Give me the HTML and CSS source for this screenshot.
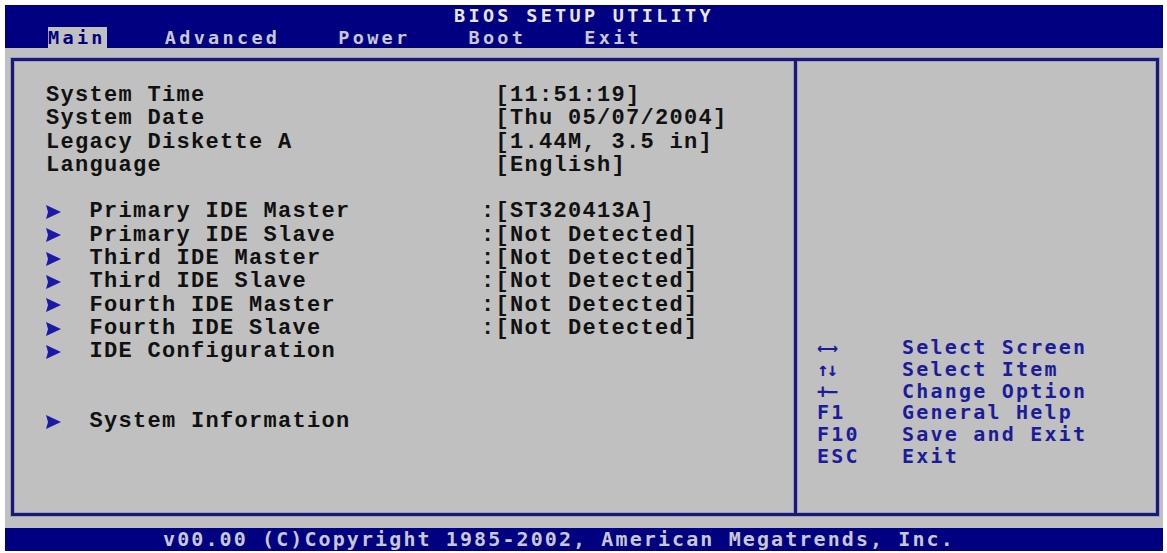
FILE: index.html
```html
<!DOCTYPE html>
<html lang="en">
<head>
    <meta charset="UTF-8">
    <meta name="viewport" content="width=device-width, initial-scale=1.0">
    <title>BIOS SETUP UTILITY</title>
    <link rel="stylesheet" href="styles.css">
</head>
<body>

    <div class="screen">
        <header class="topbar">
            <div class="title">BIOS SETUP UTILITY</div>
            <nav class="menu">
                <span class="tab active">Main</span>
                <span class="tab">Advanced</span>
                <span class="tab">Power</span>
                <span class="tab">Boot</span>
                <span class="tab">Exit</span>
            </nav>
        </header>

        <main class="workspace">
            <div class="frame">
                <section class="settings">
                    <div class="row"><span class="label">System Time</span><span class="value">[11:51:19]</span></div>
                    <div class="row"><span class="label">System Date</span><span class="value">[Thu 05/07/2004]</span></div>
                    <div class="row"><span class="label">Legacy Diskette A</span><span class="value">[1.44M, 3.5 in]</span></div>
                    <div class="row"><span class="label">Language</span><span class="value">[English]</span></div>
                    <div class="row"></div>
                    <div class="row sub"><span class="arrow"><svg width="15" height="14" viewBox="0 0 15 14"><polygon points="0,0 15,7 0,14 2,7" /></svg></span><span class="label">Primary IDE Master</span><span class="colon">:</span><span class="value">[ST320413A]</span></div>
                    <div class="row sub"><span class="arrow"><svg width="15" height="14" viewBox="0 0 15 14"><polygon points="0,0 15,7 0,14 2,7" /></svg></span><span class="label">Primary IDE Slave</span><span class="colon">:</span><span class="value">[Not Detected]</span></div>
                    <div class="row sub"><span class="arrow"><svg width="15" height="14" viewBox="0 0 15 14"><polygon points="0,0 15,7 0,14 2,7" /></svg></span><span class="label">Third IDE Master</span><span class="colon">:</span><span class="value">[Not Detected]</span></div>
                    <div class="row sub"><span class="arrow"><svg width="15" height="14" viewBox="0 0 15 14"><polygon points="0,0 15,7 0,14 2,7" /></svg></span><span class="label">Third IDE Slave</span><span class="colon">:</span><span class="value">[Not Detected]</span></div>
                    <div class="row sub"><span class="arrow"><svg width="15" height="14" viewBox="0 0 15 14"><polygon points="0,0 15,7 0,14 2,7" /></svg></span><span class="label">Fourth IDE Master</span><span class="colon">:</span><span class="value">[Not Detected]</span></div>
                    <div class="row sub"><span class="arrow"><svg width="15" height="14" viewBox="0 0 15 14"><polygon points="0,0 15,7 0,14 2,7" /></svg></span><span class="label">Fourth IDE Slave</span><span class="colon">:</span><span class="value">[Not Detected]</span></div>
                    <div class="row sub"><span class="arrow"><svg width="15" height="14" viewBox="0 0 15 14"><polygon points="0,0 15,7 0,14 2,7" /></svg></span><span class="label">IDE Configuration</span></div>
                    <div class="row"></div>
                    <div class="row"></div>
                    <div class="row sub"><span class="arrow"><svg width="15" height="14" viewBox="0 0 15 14"><polygon points="0,0 15,7 0,14 2,7" /></svg></span><span class="label">System Information</span></div>
                </section>

                <aside class="help">
                    <div class="help-row"><span class="key"><span class="glyph">&larr;&rarr;</span></span><span class="desc">Select Screen</span></div>
                    <div class="help-row"><span class="key"><span class="glyph">&uarr;&darr;</span></span><span class="desc">Select Item</span></div>
                    <div class="help-row"><span class="key"><span class="glyph">+&minus;</span></span><span class="desc">Change Option</span></div>
                    <div class="help-row"><span class="key">F1</span><span class="desc">General Help</span></div>
                    <div class="help-row"><span class="key">F10</span><span class="desc">Save and Exit</span></div>
                    <div class="help-row"><span class="key">ESC</span><span class="desc">Exit</span></div>
                </aside>
            </div>
        </main>

        <footer class="status">v00.00 (C)Copyright 1985-2002, American Megatrends, Inc.</footer>
    </div>

</body>
</html>
```

FILE: styles.css
```css
body {
    margin: 0;
    background-color: #fff;
}
.screen {
    margin: 5px 4px 0 5px;
    width: 1158px;
}

/* top bar: title + menu */
.topbar {
    background-color: #000080;
    height: 43px;
    font-family: "DejaVu Sans Mono", monospace;
    font-weight: bold;
    font-size: 18.5px;
    letter-spacing: 3.3px;
    color: #c8c8d4;
}
.title {
    height: 22px;
    line-height: 22px;
    text-align: center;
    color: #e6e6f2;
}
.menu {
    display: flex;
    gap: 58px;
    height: 21px;
    padding-left: 43px;
}
.tab {
    line-height: 21px;
}
.tab.active {
    background-color: #c0c0c0;
    color: #000080;
    padding-right: 1px;
}

/* gray area with the double frame */
.workspace {
    background-color: #c0c0c0;
    height: 480px;
    padding: 10px 4px 12px 6px;
    box-sizing: border-box;
}
.frame {
    display: flex;
    height: 458px;
    border: 3px solid #1a1a6a;
    box-shadow: 0 0 0 1px #9c9cd0, inset 0 0 0 1px #9c9cd0;
    box-sizing: border-box;
}

.settings {
    width: 780px;
    padding: 23px 0 0 32px;
    box-sizing: border-box;
    font-family: "Liberation Mono", "Courier New", monospace;
    font-weight: bold;
    font-size: 22px;
    letter-spacing: 1.3px;
    color: #111;
}
.row {
    display: flex;
    align-items: center;
    height: 23.3px;
    line-height: 23.3px;
    white-space: pre;
}
.row .label {
    width: 449.5px;
}
.row.sub .arrow {
    display: flex;
    align-items: center;
    width: 43.5px;
}
.arrow svg {
    fill: #1a1aa8;
}
.row.sub .label {
    width: 391.5px;
}
.row .colon {
    width: 14.5px;
    text-align: center;
}

.help {
    flex: 1;
    border-left: 3px solid #1a1a6a;
    box-shadow: inset 1px 0 0 #9c9cd0, -1px 0 0 #9c9cd0;
    padding: 276px 0 0 20px;
    font-family: "DejaVu Sans Mono", monospace;
    font-weight: bold;
    font-size: 20px;
    letter-spacing: 2.2px;
    color: #1c1c9a;
}
.help-row {
    display: flex;
    height: 21.8px;
    line-height: 21.8px;
}
.key {
    width: 85px;
}
.key .glyph {
    font-size: 19px;
    letter-spacing: -2px;
}

/* bottom status line */
.status {
    background-color: #000080;
    height: 23px;
    line-height: 23px;
    padding-left: 158px;
    font-family: "DejaVu Sans Mono", monospace;
    font-weight: bold;
    font-size: 20px;
    letter-spacing: 2.1px;
    color: #c8c8d4;
}
```
